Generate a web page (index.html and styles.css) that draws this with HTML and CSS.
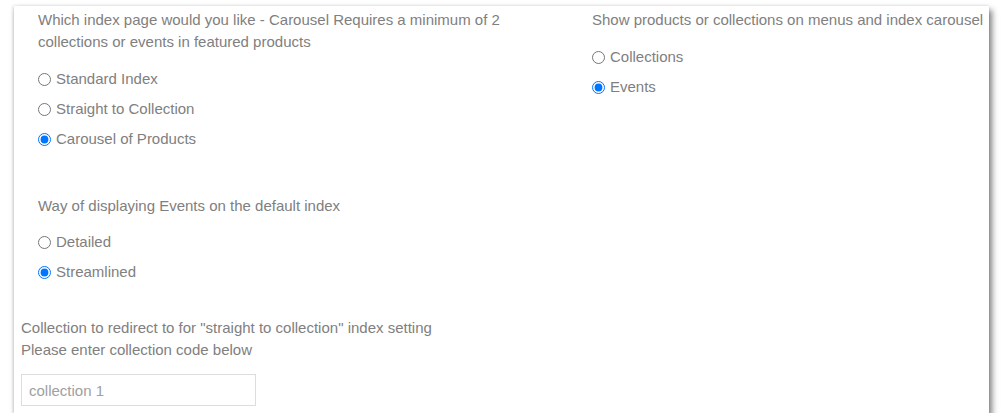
FILE: index.html
```html
<!DOCTYPE html>
<html>
<head>
<meta charset="utf-8">
<link rel="stylesheet" href="styles.css">
</head>
<body>
<div class="card">
  <div class="columns">
    <div class="col-left">
      <div class="group">
        <p class="heading">Which index page would you like - Carousel Requires a minimum of 2<br>collections or events in featured products</p>
        <div class="options">
          <label class="option"><input type="radio" name="index"> Standard Index</label>
          <label class="option"><input type="radio" name="index"> Straight to Collection</label>
          <label class="option"><input type="radio" name="index" checked> Carousel of Products</label>
        </div>
      </div>
      <div class="group group-second">
        <p class="heading">Way of displaying Events on the default index</p>
        <div class="options">
          <label class="option"><input type="radio" name="events"> Detailed</label>
          <label class="option"><input type="radio" name="events" checked> Streamlined</label>
        </div>
      </div>
    </div>
    <div class="col-right">
      <div class="group">
        <p class="heading nowrap">Show products or collections on menus and index carousel</p>
        <div class="options">
          <label class="option"><input type="radio" name="show"> Collections</label>
          <label class="option"><input type="radio" name="show" checked> Events</label>
        </div>
      </div>
    </div>
  </div>
  <div class="redirect">
    <p class="heading">Collection to redirect to for "straight to collection" index setting<br>Please enter collection code below</p>
    <input class="text-input" type="text" placeholder="collection 1">
  </div>
</div>
</body>
</html>
```
FILE: styles.css
```css
html, body {
  margin: 0;
  padding: 0;
  background: #ffffff;
}

body {
  font-family: "Liberation Sans", Arial, sans-serif;
  font-size: 15px;
  color: #808080;
}

.card {
  margin: 6px 0 0 14px;
  width: 975px;
  height: 407px;
  box-sizing: border-box;
  background: #ffffff;
  box-shadow: 3px 4px 6px rgba(0, 0, 0, 0.5), -1px 0 3px rgba(0, 0, 0, 0.15);
  padding: 3px 0 7px 0;
  display: flex;
  flex-direction: column;
}

.columns {
  display: grid;
  grid-template-columns: 578px 1fr;
}

.col-left {
  padding-left: 24px;
}

.col-right {
  padding-left: 0;
}

.heading {
  margin: 0;
  line-height: 22px;
}

.nowrap {
  white-space: nowrap;
}

.options {
  display: flex;
  flex-direction: column;
  margin-top: 11px;
}

.option {
  display: flex;
  align-items: center;
  gap: 5px;
  height: 30px;
  line-height: 30px;
}

.option input {
  margin: 0;
  width: 13px;
  height: 13px;
}

.group-second {
  margin-top: 41px;
}

.group-second .options {
  margin-top: 10px;
}

.redirect {
  margin-top: auto;
  padding-left: 7px;
  display: flex;
  flex-direction: column;
  align-items: flex-start;
}

.text-input {
  margin-top: 13px;
  width: 235px;
  height: 32px;
  box-sizing: border-box;
  border: 1px solid #dddddd;
  padding: 0 7px;
  font-family: "Liberation Sans", Arial, sans-serif;
  font-size: 15px;
  color: #a0a0a0;
  outline: none;
}

.text-input::placeholder {
  color: #a0a0a0;
}
```
